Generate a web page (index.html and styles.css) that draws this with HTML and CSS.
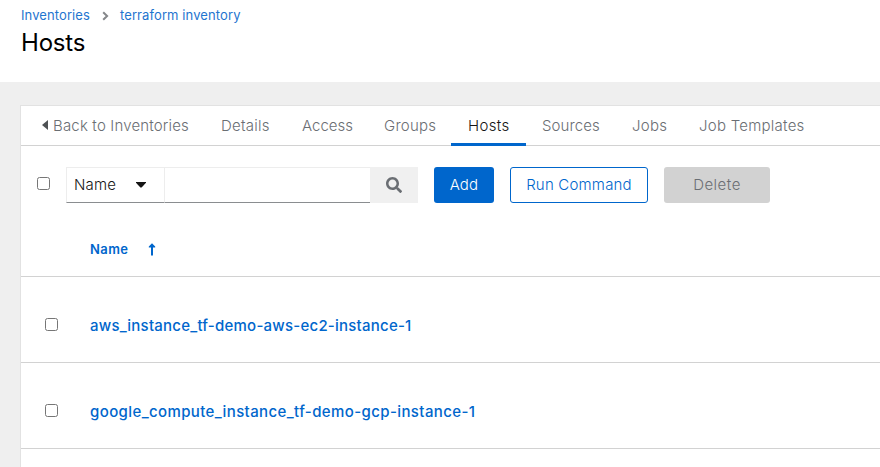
FILE: index.html
```html
<!DOCTYPE html>
<html lang="en">
<head>
<meta charset="utf-8">
<title>Hosts</title>
<link rel="stylesheet" href="styles.css">
</head>
<body>
<header class="page-header">
  <nav class="breadcrumb">
    <a class="crumb crumb-first">Inventories</a>
    <svg class="crumb-sep" viewBox="0 0 7 10"><path d="M1.2 1.2 5.1 5 1.2 8.8"/></svg>
    <a class="crumb crumb-second">terraform inventory</a>
  </nav>
  <h1 class="title">Hosts</h1>
</header>
<main class="card">
  <nav class="tabs">
    <a class="tab back"><svg class="caret-left" viewBox="0 0 6 10"><path d="M6 0v10L0 5z"/></svg><span>Back to Inventories</span></a>
    <a class="tab details">Details</a>
    <a class="tab access">Access</a>
    <a class="tab groups">Groups</a>
    <a class="tab hosts current">Hosts</a>
    <a class="tab sources">Sources</a>
    <a class="tab jobs">Jobs</a>
    <a class="tab templates">Job Templates</a>
  </nav>
  <div class="toolbar">
    <span class="check"></span>
    <div class="search">
      <div class="select"><span>Name</span><svg class="caret-down" viewBox="0 0 10 6"><path d="M0 0h10v.7L5.600 5.500H4.400L0 .7z"/></svg></div>
      <div class="input"></div>
      <div class="search-button"><svg class="magnifier" viewBox="0 0 512 512"><path d="M505 442.700 405.300 343c-4.500-4.500-10.600-7-17-7H372c27.600-35.300 44-79.700 44-128C416 93.100 322.900 0 208 0S0 93.100 0 208s93.100 208 208 208c48.300 0 92.700-16.400 128-44v16.300c0 6.400 2.500 12.500 7 17l99.700 99.700c9.400 9.400 24.600 9.400 33.900 0l28.300-28.300c9.400-9.400 9.400-24.600.1-34zM208 336c-70.700 0-128-57.200-128-128 0-70.700 57.200-128 128-128 70.700 0 128 57.200 128 128 0 70.700-57.200 128-128 128z"/></svg></div>
    </div>
    <button class="button add">Add</button>
    <button class="button run">Run Command</button>
    <button class="button delete">Delete</button>
  </div>
  <div class="table-head"><span class="sort">Name</span><svg class="arrow-up" viewBox="0 0 8 13"><path d="M4 .2 7.200 3.500V4.500H5V12.500H3V4.500H.8V3.500z"/></svg></div>
  <div class="row"><span class="check"></span><a class="name name-aws">aws_instance_tf-demo-aws-ec2-instance-1</a></div>
  <div class="row"><span class="check"></span><a class="name name-gcp">google_compute_instance_tf-demo-gcp-instance-1</a></div>
</main>
</body>
</html>
```
FILE: styles.css
```css
* { box-sizing: border-box; }
body {
  margin: 0;
  height: 467px;
  overflow: hidden;
  background: #efefef;
  color: #151515;
  font: 300 15px/24px Inter, "Liberation Sans", sans-serif;
}
.page-header { height: 82px; padding: 5px 0 0 21px; background: #fff; }
.breadcrumb { display: flex; align-items: center; height: 21px; font-size: 13px; font-weight: 400; line-height: 21px; color: #1f75cf; letter-spacing: .1px; white-space: nowrap; }
.crumb-first { width: 81px; }
.crumb-sep { width: 7px; height: 10px; margin-right: 11px; fill: none; stroke: #85878a; stroke-width: 2; }
.title { margin: 0; font-size: 24px; font-weight: 400; line-height: 33px; color: #000; letter-spacing: -.2px; }
.card { height: 372px; margin: 23px 0 0 20px; border: 1px solid #e2e2e2; border-right: 0; background: #fff; }
.tabs { display: flex; height: 40px; padding-left: 21px; border-bottom: 1px solid #d2d2d2; color: #6a6e73; letter-spacing: .25px; white-space: nowrap; }
.tab { flex: none; height: 40px; line-height: 39px; padding-left: 16px; }
.back { display: flex; align-items: center; height: 38px; width: 163px; padding: 0; letter-spacing: .17px; }
.caret-left { width: 6px; height: 10px; margin-right: 5px; fill: #4f5255; }
.details { width: 81px; }
.access { width: 82px; letter-spacing: 0; }
.groups { width: 83px; }
.hosts { width: 75px; padding-left: 17px; }
.sources { width: 90px; letter-spacing: .1px; }
.jobs { width: 67px; }
.current { color: #151515; border-bottom: 3px solid #06c; letter-spacing: .35px; }
.toolbar { display: flex; height: 78px; padding: 21px 0 0 16px; }
.check { flex: none; width: 13px; height: 13px; border: 1px solid #767676; border-radius: 2.5px; background: #fff; }
.toolbar .check { margin: 10px 16px 0 0; }
.search { display: flex; width: 352px; height: 36px; margin-right: 16px; }
.select { display: flex; align-items: center; justify-content: space-between; width: 98px; padding: 0 18px 0 7px; border: 1px solid #ededed; border-right: 0; border-bottom-color: #8a8d90; letter-spacing: .2px; }
.caret-down { width: 10px; height: 6px; fill: #151515; }
.input { width: 206px; border: 1px solid #ededed; border-right: 0; border-bottom-color: #8a8d90; }
.search-button { display: grid; place-items: center; width: 48px; background: #f0f0f0; }
.magnifier { width: 16px; height: 16px; fill: #6a6e73; }
.button { height: 36px; padding: 0; border: 0; border-radius: 3px; font: inherit; letter-spacing: .2px; }
.add { width: 60px; margin-right: 16px; background: #06c; color: #fff; }
.run { width: 138px; margin-right: 16px; border: 1px solid #06c; background: #fff; color: #06c; }
.delete { width: 106px; background: #d2d2d2; color: #6a6e73; letter-spacing: .5px; }
.table-head { display: flex; align-items: center; height: 53px; padding: 0 0 2px 69px; border-bottom: 1px solid #d2d2d2; color: #06c; font-size: 13px; font-weight: 600; letter-spacing: .4px; }
.sort { width: 58px; }
.arrow-up { width: 8px; height: 13px; fill: #06c; }
.row { display: flex; align-items: center; height: 86px; padding-left: 24px; border-bottom: 1px solid #d2d2d2; }
.row .check { margin: 10px 32px 0 0; }
.name { margin-top: 12px; color: #06c; font-weight: 500; white-space: nowrap; }
.name-aws { letter-spacing: .23px; }
.name-gcp { letter-spacing: .39px; }
```
